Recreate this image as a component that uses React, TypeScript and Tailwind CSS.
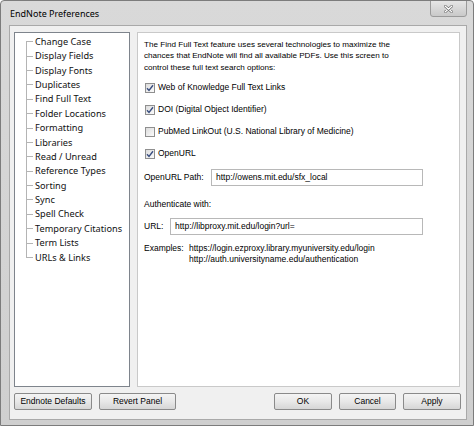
import React from 'react';

const treeItems = [
  'Change Case',
  'Display Fields',
  'Display Fonts',
  'Duplicates',
  'Find Full Text',
  'Folder Locations',
  'Formatting',
  'Libraries',
  'Read / Unread',
  'Reference Types',
  'Sorting',
  'Sync',
  'Spell Check',
  'Temporary Citations',
  'Term Lists',
  'URLs & Links',
];

function CheckBox({ checked, label }: { checked: boolean; label: string }) {
  return (
    <div className="flex h-[22px] items-center">
      <div className="ml-[1px] flex h-[10px] w-[10px] items-center justify-center border border-[#8f8f8f] bg-gradient-to-br from-[#dcdcdc] to-[#fbfbfb]">
        {checked && (
          <svg width="8" height="8" viewBox="0 0 8 8">
            <path d="M1 4.2 L3 6.4 L7 1.2" fill="none" stroke="#3b4f80" strokeWidth="1.4" />
          </svg>
        )}
      </div>
      <span className="ml-[3px]">{label}</span>
    </div>
  );
}

function Btn({ label, w }: { label: string; w: string }) {
  return (
    <button
      className={`${w} block h-[17px] rounded-[2px] border border-[#8a8a8a] bg-gradient-to-b from-[#f4f4f4] via-[#e8e8e8] to-[#d6d6d6] text-[8.5px] leading-none text-black`}
    >
      {label}
    </button>
  );
}

export default function App() {
  return (
    <div
      className="flex h-[426px] w-[474px] flex-col overflow-hidden rounded-t-[4px] border border-[#7c7c7c] bg-gradient-to-b from-[#d9d9d9] to-[#cfcfcf]"
      style={{ fontFamily: '"Liberation Sans", Arial, sans-serif' }}
    >
      {/* title bar */}
      <div className="relative flex h-[24px] shrink-0 items-center pl-[9px] pt-[2px]">
        <span className="text-[9px] text-black" style={{ fontFamily: '"Noto Sans", sans-serif' }}>
          EndNote Preferences
        </span>
        <div className="absolute right-[6px] top-[-1px] flex h-[17px] w-[37px] items-center justify-center rounded-b-[3px] border border-[#9a9a9a] bg-gradient-to-b from-[#e6e6e6] to-[#c9c9c9]">
          <svg width="9" height="8" viewBox="0 0 9 8">
            <path d="M1 1 L8 7 M8 1 L1 7" stroke="#6d6d6d" strokeWidth="2.6" strokeLinecap="round" />
            <path d="M1 1 L8 7 M8 1 L1 7" stroke="#ffffff" strokeWidth="1.2" strokeLinecap="round" />
          </svg>
        </div>
      </div>

      {/* client area */}
      <div className="mb-[5px] ml-[8px] mr-[6px] flex flex-1 flex-col border border-[#a9a9a9] bg-[#f0f0f0]">
        <div className="flex gap-[7px] pl-[4px] pr-[6px] pt-[6px]">
          {/* tree */}
          <div className="h-[355px] w-[116px] shrink-0 border border-[#7e848c] bg-white">
            <div className="relative pt-[1.5px]" style={{ fontFamily: '"Noto Sans", sans-serif' }}>
              <div className="absolute left-[11px] top-[9px] h-[216px] border-l border-[#b4b4b4]" />
              {treeItems.map((t) => (
                <div key={t} className="flex h-[14.4px] items-center text-[9.2px] text-[#111]">
                  <div className="ml-[11px] w-[7px] border-t border-[#b4b4b4]" />
                  <span className="ml-[2px] whitespace-nowrap">{t}</span>
                </div>
              ))}
            </div>
          </div>

          {/* right panel */}
          <div className="h-[355px] flex-1 border border-[#c9c9c9] bg-white pl-[6px] pt-[6px] text-[8.5px] leading-[11.3px] text-black">
            <p className="whitespace-nowrap text-[8.1px]">
              The Find Full Text feature uses several technologies to maximize the
              <br />
              chances that EndNote will find all available PDFs. Use this screen to
              <br />
              control these full text search options:
            </p>
            <div className="mt-[4px]">
              <CheckBox checked label="Web of Knowledge Full Text Links" />
              <CheckBox checked label="DOI (Digital Object Identifier)" />
              <CheckBox checked={false} label="PubMed LinkOut (U.S. National Library of Medicine)" />
              <CheckBox checked label="OpenURL" />
            </div>
            <div className="mt-[4px] flex h-[17px] items-center">
              <span className="w-[67px]">OpenURL Path:</span>
              <div className="flex h-[17px] w-[212px] items-center border border-[#b8b8b8] pl-[4px]">
                http://owens.mit.edu/sfx_local
              </div>
            </div>
            <div className="mt-[13px]">Authenticate with:</div>
            <div className="mt-[7.5px] flex h-[17px] items-center">
              <span className="w-[26px]">URL:</span>
              <div className="flex h-[17px] w-[253px] items-center border border-[#b8b8b8] pl-[4px]">
                http://libproxy.mit.edu/login?url=
              </div>
            </div>
            <div className="mt-[8px] flex">
              <span className="w-[45px]">Examples:</span>
              <div>
                <div>https://login.ezproxy.library.myuniversity.edu/login</div>
                <div>http://auth.universityname.edu/authentication</div>
              </div>
            </div>
          </div>
        </div>

        {/* buttons */}
        <div className="mt-[6px] flex items-center gap-[7px] pl-[4px] pr-[5px]">
          <Btn label="Endnote Defaults" w="w-[78px]" />
          <Btn label="Revert Panel" w="w-[77px]" />
          <div className="ml-auto flex gap-[7px]">
            <Btn label="OK" w="w-[58px]" />
            <Btn label="Cancel" w="w-[57px]" />
            <Btn label="Apply" w="w-[58px]" />
          </div>
        </div>
      </div>
    </div>
  );
}
